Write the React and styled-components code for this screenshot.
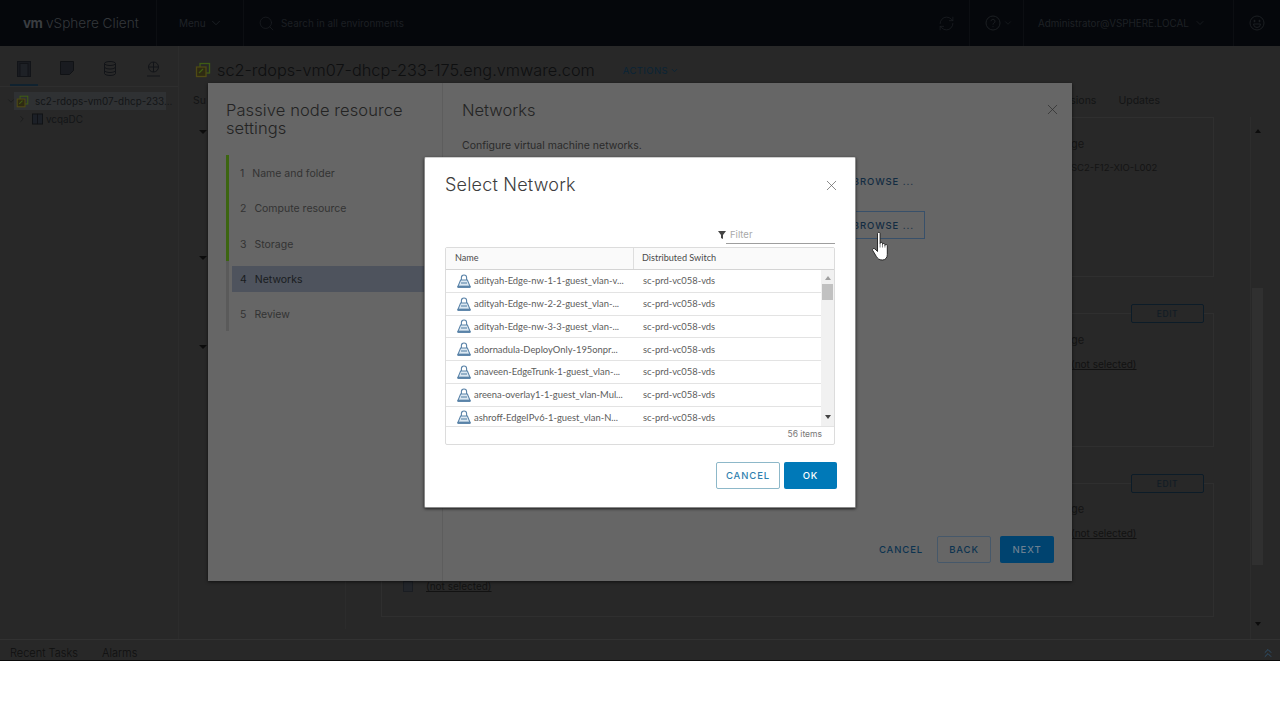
import React from 'react';
import styled, { createGlobalStyle } from 'styled-components';
import { ChevronDown, ChevronRight, ChevronsUp, Search, RefreshCw, X } from 'lucide-react';

const GlobalStyle = createGlobalStyle`
  html, body { margin: 0; padding: 0; background: #fff; }
  body { font-family: "Lato", "Liberation Sans", sans-serif; overflow: hidden; }
  * { box-sizing: border-box; }
`;

const Screen = styled.div`
  position: relative;
  width: 1280px;
  height: 661px;
  overflow: hidden;
  background: #282828;
  border-bottom: 1px solid #0a0a0a;
  display: flex;
  flex-direction: column;
`;

/* ---- top header ---- */
const Header = styled.header`
  height: 46px;
  flex: none;
  background: #05070b;
  display: flex;
  align-items: center;
  color: #1e2126;
`;
const Logo = styled.span`
  width: 23px;
  margin-left: 23px;
  font: 700 13.5px "Inter", sans-serif;
  letter-spacing: -0.6px;
  color: #3a3d41;
`;
const Brand = styled.span`
  width: 111px;
  height: 46px;
  border-right: 1px solid #0c0e12;
  font: 300 13.6px/46px "Inter", sans-serif;
  color: #34373b;
`;
const MenuButton = styled.span`
  display: flex;
  align-items: center;
  gap: 3px;
  width: 87px;
  height: 46px;
  padding-left: 22px;
  border-right: 1px solid #0c0e12;
  font: 400 10px "Inter", sans-serif;
  color: #1f2227;
`;
const SearchBox = styled.div`
  flex: 1;
  display: flex;
  align-items: center;
  gap: 6px;
  padding-left: 14px;
  font: 400 9.9px "Inter", sans-serif;
  color: #1c1f23;
`;
const HeaderRight = styled.div`
  display: flex;
  align-items: center;
  color: #1e2125;
  font: 400 9.8px "Inter", sans-serif;
`;
const HeaderCell = styled.div`
  display: flex;
  align-items: center;
  justify-content: ${p => (p.$center ? 'center' : 'flex-start')};
  gap: ${p => p.$gap || 3}px;
  width: ${p => p.$w}px;
  height: 46px;
  padding-left: ${p => p.$pl || 0}px;
  border-right: ${p => (p.$last ? 'none' : '1px solid #0c0e12')};
`;

/* ---- page body ---- */
const Body = styled.div`
  flex: 1;
  display: flex;
  min-height: 0;
`;
const Sidebar = styled.aside`
  width: 179px;
  flex: none;
  border-right: 1px solid #2c2c2c;
`;
const SideTabs = styled.div`
  display: flex;
  gap: 15px;
  padding: 15px 0 0 10px;
  height: 41px;
  border-bottom: 1px solid #2e2e2e;
`;
const SideTab = styled.div`
  width: 28px;
  height: 25px;
  display: flex;
  justify-content: center;
  border-bottom: ${p => (p.$active ? '2px solid #10222f' : 'none')};
`;
const Tree = styled.div`
  padding-top: 5px;
`;
const TreeRow = styled.div`
  display: flex;
  align-items: center;
  height: 18px;
  margin-left: ${p => p.$indent}px;
  font: 400 9.9px "Inter", sans-serif;
  color: #131517;
  white-space: nowrap;
`;
const TreeLabel = styled.div`
  display: flex;
  align-items: center;
  height: 18px;
  gap: ${p => p.$gap}px;
  margin-left: ${p => p.$ml || 0}px;
  padding-left: ${p => (p.$selected ? 2 : 0)}px;
  width: ${p => (p.$selected ? '152px' : 'auto')};
  background: ${p => (p.$selected ? '#2f3133' : 'transparent')};
`;

const Content = styled.main`
  flex: 1;
  display: flex;
  flex-direction: column;
  padding-left: 14px;
  min-width: 0;
`;
const TitleBar = styled.div`
  display: flex;
  align-items: center;
  height: 48px;
  gap: 6px;
  padding-left: 2px;
  flex: none;
`;
const ObjectTitle = styled.h1`
  margin: 0;
  font: 300 16.3px "Inter", sans-serif;
  color: #0e0f10;
  white-space: nowrap;
`;
const Actions = styled.span`
  margin-left: 22px;
  display: flex;
  align-items: center;
  gap: 2px;
  font: 400 9.5px "Inter", sans-serif;
  letter-spacing: 0.4px;
  color: #0a2436;
`;
const TabsBar = styled.nav`
  height: 23px;
  flex: none;
  display: flex;
  justify-content: space-between;
  font: 400 10.5px/14px "Inter", sans-serif;
  color: #131415;
  padding: 0 120px 0 0;
`;
const TabsEnd = styled.div`
  display: flex;
  gap: 22px;
`;
const Scroller = styled.div`
  flex: 1;
  display: flex;
  min-height: 0;
`;
const LeftStrip = styled.div`
  width: 153px;
  flex: none;
  border-right: 1px solid #2c2c2c;
  margin-bottom: 10px;
  display: flex;
  flex-direction: column;
  color: #0c0c0c;
`;
const Caret = styled.span`
  margin: ${p => p.$top}px 0 0 6px;
  width: 0;
  height: 0;
  border-left: 4px solid transparent;
  border-right: 4px solid transparent;
  border-top: 4px solid currentColor;
`;
const Cards = styled.div`
  width: 833px;
  margin-left: 35px;
  display: flex;
  flex-direction: column;
  gap: 36px;
`;
const Card = styled.section`
  height: ${p => p.$h}px;
  border: 1px solid #2f2f2f;
  padding-right: 9px;
`;
const CardHead = styled.div`
  display: flex;
  justify-content: flex-end;
  margin-top: -10px;
  height: 20px;
`;
const EditButton = styled.span`
  width: 73px;
  height: 19px;
  background: #282828;
  border: 1px solid #0c1c28;
  border-radius: 2px;
  display: flex;
  align-items: center;
  justify-content: center;
  font: 500 8.5px "Inter", sans-serif;
  letter-spacing: 0.6px;
  color: #111c25;
`;
const CardLabel = styled.div`
  margin: ${p => p.$top}px 0 0 689px;
  font: 400 ${p => p.$size || 11}px/14px "Inter", sans-serif;
  color: #141414;
  white-space: nowrap;
`;
const NotSelected = styled.span`
  text-decoration: underline;
  color: #121212;
  font: 400 10px "Inter", sans-serif;
`;
const CheckRow = styled.div`
  display: flex;
  align-items: center;
  gap: 13px;
  margin: 40px 0 0 21px;
`;
const CheckBox = styled.i`
  width: 10px;
  height: 11px;
  background: #22252a;
  border: 1px solid #1a1d22;
`;
const VScroll = styled.div`
  width: 15px;
  flex: none;
  margin-left: 36px;
  padding-bottom: 13px;
  border-left: 1px solid #2d2d2d;
  display: flex;
  flex-direction: column;
  justify-content: space-between;
  align-items: center;
  color: #0c0c0c;
  position: relative;
`;
const VThumb = styled.div`
  position: absolute;
  top: 171px;
  left: 1px;
  width: 11px;
  height: 277px;
  background: #303030;
`;
const ScrollCaret = styled.span`
  margin-top: ${p => p.$mt || 0}px;
  width: 0;
  height: 0;
  border-left: 3px solid transparent;
  border-right: 3px solid transparent;
  color: ${p => p.$color || 'inherit'};
  ${p => (p.$up ? 'border-bottom: 4px solid currentColor;' : 'border-top: 4px solid currentColor;')}
`;

/* ---- bottom tasks strip ---- */
const TasksBar = styled.footer`
  height: 21px;
  flex: none;
  border-top: 1px solid #323232;
  display: flex;
  align-items: flex-start;
  padding: 6px 5px 0 10px;
  gap: 24px;
  font: 300 11px/15px "Inter", sans-serif;
  color: #0f0f0f;
`;
const Grow = styled.div`
  flex: 1;
  display: flex;
  justify-content: flex-end;
  color: #2f5675;
`;

/* ---- wizard modal, lies over the page ---- */
const Wizard = styled.div`
  position: absolute;
  left: 208px;
  top: 83px;
  width: 864px;
  height: 498px;
  background: #666;
  box-shadow: 0 1px 3px rgba(0, 0, 0, 0.6);
  display: flex;
`;
const WizardSide = styled.div`
  width: 235px;
  flex: none;
  border-right: 1px solid #5d5d5d;
  padding: 18px 0 0 18px;
`;
const WizardTitle = styled.h2`
  margin: 0;
  font: 300 16.5px/18px "Inter", sans-serif;
  color: #232323;
  letter-spacing: 0.1px;
`;
const Steps = styled.ol`
  list-style: none;
  margin: 18px 0 0;
  padding: 0;
  border-left: 3px solid #5a5a5a;
  position: relative;
`;
const StepBar = styled.span`
  position: absolute;
  left: -3px;
  top: 0;
  width: 3px;
  height: 106px;
  background: #3c6511;
`;
const Step = styled.li`
  height: 35.25px;
  margin-left: 3px;
  margin-right: -1px;
  padding: 2px 0 0 8px;
  display: flex;
  align-items: center;
  gap: 8px;
  font: 400 10.5px "Inter", sans-serif;
  color: ${p => (p.$active ? '#191c20' : '#333')};
  position: relative;
  &::before {
    content: '';
    display: ${p => (p.$active ? 'block' : 'none')};
    position: absolute;
    left: 0;
    right: 0;
    top: 5px;
    bottom: 4px;
    background: #4e535d;
  }
  b, span { position: relative; font-weight: 400; }
`;
const WizardMain = styled.div`
  flex: 1;
  position: relative;
  padding: 18px 20px 0 19px;
  display: flex;
  flex-direction: column;
`;
const WizardHeading = styled.h2`
  margin: 0;
  font: 300 16.5px/18px "Inter", sans-serif;
  color: #242424;
`;
const WizardClose = styled.span`
  position: absolute;
  top: 18px;
  right: 11px;
  color: #2c2c2c;
  line-height: 0;
`;
const WizardNote = styled.p`
  margin: 20px 0 0;
  font: 400 10.5px/14px "Inter", sans-serif;
  color: #2a2a2a;
`;
const BrowseRow = styled.div`
  display: flex;
  flex-direction: column;
  align-items: flex-end;
  padding-right: 127px;
  margin-top: 14px;
  gap: 16px;
`;
const Browse = styled.span`
  width: 95px;
  height: 28px;
  padding-right: 10px;
  display: flex;
  align-items: center;
  justify-content: flex-end;
  border: 1px solid ${p => (p.$outlined ? '#38506a' : 'transparent')};
  font: 500 9.5px "Inter", sans-serif;
  letter-spacing: 0.9px;
  color: #132c42;
`;
const WizardFooter = styled.div`
  position: absolute;
  right: 18px;
  bottom: 18px;
  display: flex;
  align-items: center;
  gap: 9px;
`;
const WizardBtn = styled.span`
  height: 27px;
  width: ${p => p.$w}px;
  display: flex;
  align-items: center;
  justify-content: center;
  border-radius: 2px;
  font: 500 9.5px "Inter", sans-serif;
  letter-spacing: 0.9px;
  color: ${p => (p.$kind === 'primary' ? '#6d8091' : '#0c3350')};
  background: ${p => (p.$kind === 'primary' ? '#00436f' : 'transparent')};
  border: ${p => (p.$kind === 'outline' ? '1px solid #46586a' : 'none')};
`;

/* ---- select network dialog, over the wizard ---- */
const Dialog = styled.div`
  position: absolute;
  left: 424px;
  top: 157px;
  width: 432px;
  height: 351px;
  background: #fff;
  border: 1px solid #8a8a8a;
  border-top-color: #cfcfcf;
  border-radius: 2px;
  box-shadow: 0 1px 3px rgba(0, 0, 0, 0.7);
  padding: 17px 18px 0 20px;
  display: flex;
  flex-direction: column;
`;
const DialogTop = styled.div`
  display: flex;
  justify-content: space-between;
  align-items: center;
  height: 20px;
`;
const DialogTitle = styled.h3`
  margin: 0;
  font: 300 18px/20px "Inter", sans-serif;
  letter-spacing: 0.2px;
  color: #3d3d3d;
`;
const CloseBtn = styled.span`
  line-height: 0;
  color: #5a5a5a;
  margin-right: -3px;
`;
const FilterRow = styled.div`
  display: flex;
  justify-content: flex-end;
  align-items: center;
  margin-top: 31px;
  padding-right: 2px;
`;
const FilterInput = styled.div`
  width: 109px;
  height: 18px;
  border-bottom: 1px solid #9e9e9e;
  font: 400 9.5px/17px "Inter", sans-serif;
  color: #a9a9a9;
  padding-left: 4px;
`;
const Grid = styled.div`
  width: 390px;
  margin-top: 3px;
  border: 1px solid #dcdcdc;
  border-radius: 2px;
  display: flex;
  flex-direction: column;
`;
const GridHead = styled.div`
  height: 22px;
  flex: none;
  display: grid;
  grid-template-columns: 187px 1fr;
  background: #fafafa;
  border-bottom: 1px solid #d4d4d4;
  font: 400 9.1px/19px "Lato", sans-serif;
  color: #4a4a4a;
`;
const HeadCell = styled.div`
  padding-left: ${p => p.$pl}px;
  border-left: ${p => (p.$divided ? '1px solid #dedede' : 'none')};
`;
const GridBody = styled.div`
  height: 156px;
  overflow: hidden;
  display: flex;
`;
const Rows = styled.div`
  width: 375px;
  flex: none;
`;
const Row = styled.div`
  height: 22.75px;
  display: grid;
  grid-template-columns: 187px 1fr;
  align-items: center;
  border-bottom: 1px solid #e3e3e3;
  font: 400 9.4px "Lato", sans-serif;
  color: #5c5c5c;
`;
const NameCell = styled.div`
  display: flex;
  align-items: center;
  gap: 3px;
  padding-left: 11px;
  white-space: nowrap;
  svg { flex: none; }
`;
const SwitchCell = styled.div`
  padding-left: 10px;
`;
const GridScroll = styled.div`
  flex: 1;
  background: #f1f1f1;
  position: relative;
  display: flex;
  flex-direction: column;
  justify-content: space-between;
  align-items: center;
  padding: 6px 0 7px;
  color: #444;
`;
const GridThumb = styled.div`
  position: absolute;
  top: 14px;
  left: 1px;
  width: 11px;
  height: 16px;
  background: #c1c1c1;
`;
const GridFooter = styled.div`
  height: 18px;
  border-top: 1px solid #e3e3e3;
  text-align: right;
  padding-right: 12px;
  font: 400 8.5px/15px "Inter", sans-serif;
  color: #777;
`;
const DialogActions = styled.div`
  display: flex;
  justify-content: flex-end;
  gap: 4px;
  margin-top: 17px;
`;
const DialogBtn = styled.span`
  width: ${p => p.$w}px;
  height: 27px;
  border-radius: 2px;
  display: flex;
  align-items: center;
  justify-content: center;
  font: 500 9.5px "Inter", sans-serif;
  letter-spacing: 0.9px;
  color: ${p => (p.$primary ? '#fff' : '#2f7fae')};
  background: ${p => (p.$primary ? '#0079b8' : '#fff')};
  border: ${p => (p.$primary ? 'none' : '1px solid #8db8c9')};
`;
const Pointer = styled.svg`
  position: absolute;
  left: 870px;
  top: 231px;
`;

const NetIcon = () => (
  <svg width="14" height="14" viewBox="0 0 14 14" fill="none" stroke="#5a83a8" strokeWidth="1.1">
    <path d="M4.4 6V3.6a2.6 2.6 0 0 1 5.2 0V6" />
    <path d="M1 12.4 3.6 6h6.8L13 12.4z" fill="#dce8f2" />
    <path d="M1 12.4h12v1H1z" fill="#9fbcd4" />
    <path d="M4 9h6" />
  </svg>
);

const HostIcon = ({ size = 16 }) => (
  <svg width={size} height={size} viewBox="0 0 16 16" fill="none" style={{ flex: 'none' }}>
    <rect x="5" y="1.5" width="9.5" height="9.5" stroke="#3f5c14" strokeWidth="1.3" />
    <rect x="1.5" y="5" width="9.5" height="9.5" fill="#2e2a12" stroke="#4f4a14" strokeWidth="1.3" />
    <path d="M4 11l4-4" stroke="#3f5c14" strokeWidth="1.3" />
  </svg>
);

const networks = [
  'adityah-Edge-nw-1-1-guest_vlan-v...',
  'adityah-Edge-nw-2-2-guest_vlan-...',
  'adityah-Edge-nw-3-3-guest_vlan-...',
  'adornadula-DeployOnly-195onpr...',
  'anaveen-EdgeTrunk-1-guest_vlan-...',
  'areena-overlay1-1-guest_vlan-Mul...',
  'ashroff-EdgeIPv6-1-guest_vlan-N...',
];

const steps = ['Name and folder', 'Compute resource', 'Storage', 'Networks', 'Review'];

export default function App() {
  return (
    <>
      <GlobalStyle />
      <Screen>
        <Header>
          <Logo>vm</Logo>
          <Brand>vSphere Client</Brand>
          <MenuButton>Menu <ChevronDown size={14} strokeWidth={1.5} /></MenuButton>
          <SearchBox>
            <Search size={17} strokeWidth={1} />
            Search in all environments
          </SearchBox>
          <HeaderRight>
            <HeaderCell $w={46} $center><RefreshCw size={17} strokeWidth={1} /></HeaderCell>
            <HeaderCell $w={54} $gap={2} $pl={15}>
              <svg width="16" height="16" viewBox="0 0 16 16" fill="none" stroke="currentColor" strokeWidth="0.9">
                <circle cx="8" cy="8" r="7" />
                <path d="M6 6.2a2 2 0 1 1 3 1.8c-.7.4-1 .8-1 1.6M8 11.2v1" />
              </svg>
              <ChevronDown size={10} strokeWidth={1.5} />
            </HeaderCell>
            <HeaderCell $w={210} $gap={5} $pl={14}>Administrator@VSPHERE.LOCAL <ChevronDown size={12} strokeWidth={1.5} /></HeaderCell>
            <HeaderCell $w={46} $center $last>
              <svg width="16" height="16" viewBox="0 0 16 16" fill="none" stroke="currentColor" strokeWidth="0.9">
                <circle cx="8" cy="8" r="7" />
                <circle cx="5.5" cy="6" r="0.7" fill="currentColor" />
                <circle cx="10.5" cy="6" r="0.7" fill="currentColor" />
                <path d="M4.5 9h7a3.5 3.5 0 0 1-7 0z" />
              </svg>
            </HeaderCell>
          </HeaderRight>
        </Header>
        <Body>
          <Sidebar>
            <SideTabs>
              <SideTab $active>
                <svg width="14" height="16" viewBox="0 0 14 16" fill="#191b20" stroke="#121418"><rect x="0.5" y="0.5" width="13" height="15" /><rect x="3" y="2.5" width="8" height="13" fill="#1e2126" /></svg>
              </SideTab>
              <SideTab>
                <svg width="14" height="14" viewBox="0 0 14 14" fill="#191b20" stroke="#101215"><path d="M.5.5h13v9l-4 4h-9z" /></svg>
              </SideTab>
              <SideTab>
                <svg width="14" height="15" viewBox="0 0 14 15" fill="none" stroke="#121418"><ellipse cx="7" cy="2.5" rx="5.5" ry="2" /><path d="M1.5 2.5v10c0 1 2.5 2 5.5 2s5.5-1 5.5-2v-10M1.5 6c0 1 2.5 2 5.5 2s5.5-1 5.5-2M1.5 9.5c0 1 2.5 2 5.5 2s5.5-1 5.5-2" /></svg>
              </SideTab>
              <SideTab>
                <svg width="15" height="16" viewBox="0 0 15 16" fill="none" stroke="#121418"><circle cx="7.5" cy="6" r="5" /><path d="M3 6h9M7.5 1v10M1 15h13" /></svg>
              </SideTab>
            </SideTabs>
            <Tree>
              <TreeRow $indent={6}>
                <ChevronDown size={10} strokeWidth={1.5} />
                <TreeLabel $selected $gap={6} $ml={-2}>
                  <HostIcon size={13} />
                  <span>sc2-rdops-vm07-dhcp-233...</span>
                </TreeLabel>
              </TreeRow>
              <TreeRow $indent={17}>
                <ChevronRight size={10} strokeWidth={1.5} />
                <TreeLabel $gap={3} $ml={5}>
                  <svg width="11" height="12" viewBox="0 0 12 12" fill="#1c2027" stroke="#101215"><rect x=".5" y=".5" width="11" height="11" /><path d="M6 .5v11" /></svg>
                  <span>vcqaDC</span>
                </TreeLabel>
              </TreeRow>
            </Tree>
          </Sidebar>
          <Content>
            <TitleBar>
              <HostIcon />
              <ObjectTitle>sc2-rdops-vm07-dhcp-233-175.eng.vmware.com</ObjectTitle>
              <Actions>ACTIONS <ChevronDown size={9} strokeWidth={2.5} /></Actions>
            </TitleBar>
            <TabsBar>
              <span>Su</span>
              <TabsEnd><span>sions</span><span>Updates</span></TabsEnd>
            </TabsBar>
            <Scroller>
              <LeftStrip>
                <Caret $top={13} />
                <Caret $top={122} />
                <Caret $top={85} />
              </LeftStrip>
              <Cards>
                <Card $h={160}>
                  <CardLabel $top={19}>ge</CardLabel>
                  <CardLabel $top={10} $size={9.5}>SC2-F12-XIO-L002</CardLabel>
                </Card>
                <Card $h={134}>
                  <CardHead><EditButton>EDIT</EditButton></CardHead>
                  <CardLabel $top={9}>ge</CardLabel>
                  <CardLabel $top={10}><NotSelected>(not selected)</NotSelected></CardLabel>
                </Card>
                <Card $h={134}>
                  <CardHead><EditButton>EDIT</EditButton></CardHead>
                  <CardLabel $top={8}>ge</CardLabel>
                  <CardLabel $top={10}><NotSelected>(not selected)</NotSelected></CardLabel>
                  <CheckRow>
                    <CheckBox />
                    <NotSelected>(not selected)</NotSelected>
                  </CheckRow>
                </Card>
              </Cards>
              <VScroll>
                <ScrollCaret $up $mt={12} />
                <VThumb />
                <ScrollCaret />
              </VScroll>
            </Scroller>
          </Content>
        </Body>
        <TasksBar>
          <span>Recent Tasks</span>
          <span>Alarms</span>
          <Grow><ChevronsUp size={14} strokeWidth={1.5} /></Grow>
        </TasksBar>

        <Wizard>
          <WizardSide>
            <WizardTitle>Passive node resource settings</WizardTitle>
            <Steps>
              <StepBar />
              {steps.map((s, i) => (
                <Step key={s} $active={i === 3}>
                  <b>{i + 1}</b>
                  <span>{s}</span>
                </Step>
              ))}
            </Steps>
          </WizardSide>
          <WizardMain>
            <WizardHeading>Networks</WizardHeading>
            <WizardClose><X size={17} strokeWidth={1} /></WizardClose>
            <WizardNote>Configure virtual machine networks.</WizardNote>
            <BrowseRow>
              <Browse>BROWSE ...</Browse>
              <Browse $outlined>BROWSE ...</Browse>
            </BrowseRow>
            <WizardFooter>
              <WizardBtn $w={54}>CANCEL</WizardBtn>
              <WizardBtn $w={54} $kind="outline">BACK</WizardBtn>
              <WizardBtn $w={54} $kind="primary">NEXT</WizardBtn>
            </WizardFooter>
          </WizardMain>
        </Wizard>

        <Dialog>
          <DialogTop>
            <DialogTitle>Select Network</DialogTitle>
            <CloseBtn><X size={17} strokeWidth={1} /></CloseBtn>
          </DialogTop>
          <FilterRow>
            <svg width="8" height="8" viewBox="0 0 8 8" fill="#444"><path d="M0 0h8L5 4v4L3 7V4z" /></svg>
            <FilterInput>Filter</FilterInput>
          </FilterRow>
          <Grid>
            <GridHead>
              <HeadCell $pl={9}>Name</HeadCell>
              <HeadCell $pl={8} $divided>Distributed Switch</HeadCell>
            </GridHead>
            <GridBody>
              <Rows>
                {networks.map(n => (
                  <Row key={n}>
                    <NameCell><NetIcon />{n}</NameCell>
                    <SwitchCell>sc-prd-vc058-vds</SwitchCell>
                  </Row>
                ))}
              </Rows>
              <GridScroll>
                <ScrollCaret $up $color="#a0a0a0" />
                <GridThumb />
                <ScrollCaret />
              </GridScroll>
            </GridBody>
            <GridFooter>56 items</GridFooter>
          </Grid>
          <DialogActions>
            <DialogBtn $w={64}>CANCEL</DialogBtn>
            <DialogBtn $w={53} $primary>OK</DialogBtn>
          </DialogActions>
        </Dialog>

        <Pointer width="24" height="30" viewBox="0 0 20 30">
          <path
            d="M5.5 2.5c0-1.6 2.6-1.6 2.6 0v10c0-1.5 2.4-1.5 2.4 0v1c0-1.4 2.4-1.4 2.4 0v1c0-1.3 2.4-1.3 2.4 0v9c0 3-1.6 5.5-5 5.5-3.3 0-4.6-1.5-6-3.6l-3.6-6c-.8-1.5 1-2.6 2.2-1.5l2.6 2.6z"
            fill="#fff"
            stroke="#1a1a1a"
            strokeWidth="0.9"
          />
          <path d="M8.1 12.5v4M10.5 13.5v3M12.9 14.5v2" stroke="#555" strokeWidth="0.7" />
        </Pointer>
      </Screen>
    </>
  );
}
